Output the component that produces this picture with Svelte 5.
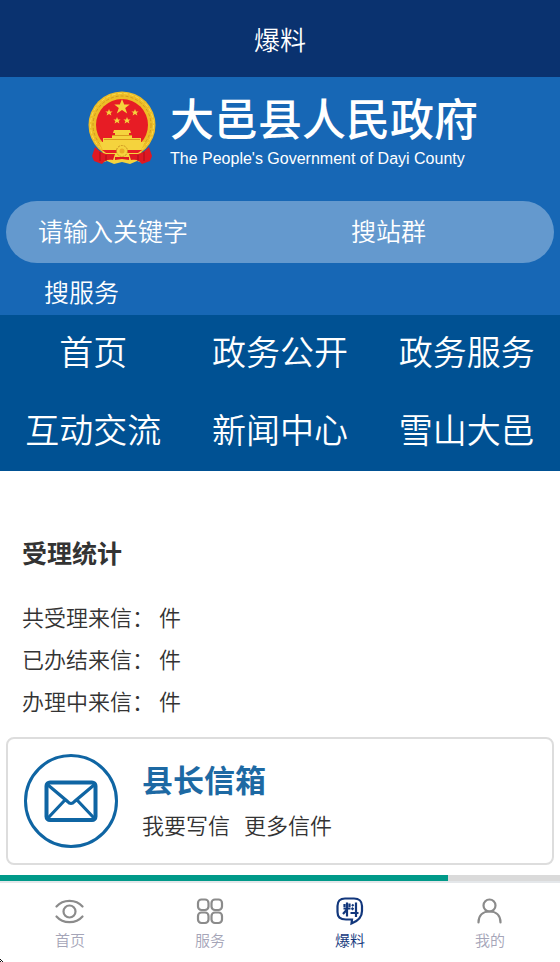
<script>
  const sections = ['首页', '政务公开', '政务服务', '互动交流', '新闻中心', '雪山大邑'];
  const stats = ['共受理来信：', '已办结来信：', '办理中来信：'];
  const tabs = [
    { id: 'home', label: '首页' },
    { id: 'service', label: '服务' },
    { id: 'report', label: '爆料' },
    { id: 'mine', label: '我的' }
  ];
  let active = $state('report');
  let keyword = $state('');
  const progress = 80;
</script>

<div class="page">
  <header class="titlebar"><h1>爆料</h1></header>

  <section class="hero">
    <div class="brand">
      <svg class="emblem" viewBox="0 0 68 74" aria-hidden="true">
        <circle cx="34" cy="34" r="33.500" fill="#edbd27" />
        <circle cx="34" cy="34" r="29" fill="none" stroke="#d39a1e" stroke-width="1" stroke-dasharray="3 2" />
        <circle cx="34" cy="34" r="31.500" fill="none" stroke="#f9db50" stroke-width="1" stroke-dasharray="4 2" />
        <circle cx="34" cy="34" r="26" fill="#e71c25" />
        <g fill="#f5d33d">
          <path d="m34 8 2.200 5.500h5.500l-4.500 3.500 2 5.500-5.200-3.500-5.200 3.500 2-5.500-4.500-3.500h5.500z" />
          <path d="m21 18 1 2.400h2.600l-2 1.600.8 2.500-2.400-1.500-2.400 1.500.8-2.500-2-1.600H20z" />
          <path d="m47 18 1 2.400h2.600l-2 1.600.8 2.500-2.400-1.500-2.400 1.500.8-2.500-2-1.600H46z" />
          <path d="m29 26 1 2.400h2.600l-2 1.600.8 2.500-2.400-1.500-2.400 1.500.8-2.500-2-1.600H28z" />
          <path d="m39 26 1 2.400h2.600l-2 1.600.8 2.500-2.400-1.500-2.400 1.500.8-2.500-2-1.600H38z" />
          <path d="M26 39h16l1 3h-2v2h3v3h9v4H15v-4h9v-3h3v-2h-2z" />
          <path d="M11 51h46l-4 8 2 13-6-2-7 3-8-2-8 2-7-3-6 2 2-13z" />
        </g>
        <path d="M24 44.500h20M16 48.500h36" stroke="#d99b1c" stroke-width="1" />
        <path d="M14 59h40l-4 3H18z" fill="#e71c25" />
        <path d="M7 56c4 4 7 6 11 7h9l-2 6c-5-1-8 0-11 4l-8-3-2-5zM61 56c-4 4-7 6-11 7h-9l2 6c5-1 8 0 11 4l8-3 2-5z" fill="#df1822" />
        <path d="M12 61v9M18 64v6M56 61v9M50 64v6" stroke="#a80d19" />
        <circle cx="34" cy="60" r="5.500" fill="#f5d33d" stroke="#cb9120" stroke-dasharray="2 1" />
        <circle cx="34" cy="60" r="2.500" fill="#e9ad25" />
        <path d="M27 66h14v3l-7-1-7 1z" fill="#df1822" />
      </svg>
      <div class="names">
        <strong>大邑县人民政府</strong>
        <span>The People's Government of Dayi County</span>
      </div>
    </div>
    <form class="search" onsubmit={(e) => e.preventDefault()}>
      <div class="field">
        <input type="text" aria-label="请输入关键字" placeholder="请输入关键字" bind:value={keyword} />
        <button type="submit">搜站群</button>
      </div>
      <button class="second" type="button">搜服务</button>
    </form>
  </section>

  <nav class="sections">
    {#each sections as name}
      <a href="#top">{name}</a>
    {/each}
  </nav>

  <main>
    <h2>受理统计</h2>
    <ul>
      {#each stats as label}
        <li>{label} 件</li>
      {/each}
    </ul>
  </main>

  <section class="card">
    <svg viewBox="0 0 94 94" fill="none" stroke="#0f65a3" aria-hidden="true">
      <circle cx="47" cy="47" r="45.500" stroke-width="3" />
      <rect x="22.500" y="28.500" width="49" height="37.500" rx="3.500" stroke-width="4" />
      <path d="m24 31 19.500 16.500q3.500 4 7 0L70 31M24 64l17-18M70 64 53 46" stroke-width="3.200" />
    </svg>
    <div class="letters">
      <h3>县长信箱</h3>
      <p><a href="#write">我要写信</a><a href="#more">更多信件</a></p>
    </div>
  </section>

  <div class="progress"><div style="width: {progress}%"></div></div>

  <nav class="tabs">
    {#each tabs as tab}
      <button type="button" class:active={active === tab.id} onclick={() => (active = tab.id)}>
        <svg viewBox="0 0 30 30" fill="none" stroke="currentColor" stroke-width="2.200" stroke-linecap="round" aria-hidden="true">
          {#if tab.id === 'home'}
            <circle cx="14.500" cy="15.500" r="6" />
            <path d="M1.500 10.500C8 3 21 3 27.500 10.500M1.500 20.500c6.500 7.500 19.500 7.500 26 0" />
          {:else if tab.id === 'service'}
            <rect x="3" y="3.500" width="10.500" height="10.500" rx="3.500" />
            <rect x="16.500" y="3.500" width="10.500" height="10.500" rx="3.500" />
            <rect x="3" y="16.500" width="10.500" height="10.500" rx="3.500" />
            <rect x="16.500" y="16.500" width="10.500" height="10.500" rx="3.500" />
          {:else if tab.id === 'report'}
            <path d="M10 2.500h9c5 0 8 3 8 7.500v5c0 6-4 10-10.500 12.500l.5-4h-6C5 23.500 2.500 21 2.500 16V10c0-4.500 2.500-7.500 7.500-7.500z" />
            <path d="M8.500 12.500h7M9.500 8v3M14.500 7.500v3.500M12 6.500v14M11.500 14l-3.500 4M17 8.500l1.500 1.500M16.500 12l2 1.500M15.500 17h8M21 6.500v14.500" stroke-linecap="butt" />
          {:else}
            <circle cx="14.500" cy="9.500" r="6" />
            <path d="M3.500 26.500c0-7 4.500-11 11-11s11 4 11 11" />
          {/if}
        </svg>
        <span>{tab.label}</span>
      </button>
    {/each}
    <svg class="pointer" viewBox="0 0 4 4" aria-hidden="true"><path d="M0 0h1v1H0zM1 1h1v1H1zM2 2h1v1H2zM0 2h1v1H0zM3 3h1v1H3z" fill="#111" /></svg>
  </nav>
</div>

<style>
  :global(body) {
    margin: 0;
    background: #fff;
  }
  .page {
    font-family: 'Noto Sans CJK SC', sans-serif;
    color: #333;
    font-weight: 350;
  }
  h1, h2, h3, p, ul {
    margin: 0;
    padding: 0;
    list-style: none;
  }
  a {
    color: inherit;
    text-decoration: none;
  }
  button, input {
    font: inherit;
    color: inherit;
    background: none;
    border: 0;
    padding: 0;
    margin: 0;
  }
  button {
    cursor: pointer;
  }
  .titlebar {
    background: #0a326f;
    color: #fff;
    text-align: center;
    padding: 20px 0;
  }
  .titlebar h1 {
    font-size: 26px;
    line-height: 37px;
    font-weight: 350;
  }
  .hero {
    background: #1767b5;
    color: #fff;
    padding: 14px 6px 0;
  }
  .brand {
    display: flex;
    justify-content: center;
    gap: 14px;
    padding: 0 0 34px 6px;
  }
  .emblem {
    width: 68px;
    height: 74px;
  }
  .names {
    display: flex;
    flex-direction: column;
    font-family: 'Liberation Sans', 'Noto Sans CJK SC', sans-serif;
  }
  .names strong {
    font-size: 44px;
    line-height: 60px;
    font-weight: 500;
  }
  .names span {
    font-size: 16px;
    line-height: 16px;
    font-weight: 400;
  }
  .search {
    font-size: 25px;
  }
  .field {
    box-sizing: border-box;
    display: flex;
    align-items: center;
    height: 62px;
    border-radius: 31px;
    background: #6499ce;
    padding: 0 128px 4px 32px;
  }
  .field input {
    flex: 1;
    min-width: 0;
    height: 50px;
    outline: 0;
  }
  .field input::placeholder {
    color: #fff;
    opacity: 1;
  }
  .second {
    display: block;
    margin-left: 38px;
    padding-top: 4px;
    line-height: 48px;
  }
  .sections {
    display: grid;
    grid-template-columns: repeat(3, 1fr);
    background: #005193;
    color: #fff;
    text-align: center;
    font-size: 34px;
    line-height: 72px;
  }
  .sections a {
    padding-bottom: 6px;
  }
  main {
    padding: 60px 22px 16px;
  }
  h2 {
    font-size: 25px;
    line-height: 42px;
    font-weight: 700;
  }
  ul {
    padding-top: 22px;
    font-size: 22px;
    line-height: 42px;
  }
  .card {
    display: flex;
    align-items: center;
    gap: 24px;
    margin: 0 6px 10px;
    padding: 15px 16px;
    border: 2px solid #ddd;
    border-radius: 8px;
  }
  .card svg {
    width: 94px;
    height: 94px;
  }
  h3 {
    font-size: 31px;
    line-height: 46px;
    font-weight: 700;
    color: #1d69a3;
  }
  .card p {
    display: flex;
    gap: 14px;
    font-size: 22px;
    line-height: 44px;
  }
  .progress {
    height: 6px;
    background: #dadada;
  }
  .progress div {
    height: 6px;
    background: #009a89;
  }
  .tabs {
    position: relative;
    display: flex;
    border-top: 2px solid #e4e7ea;
    background: #fff;
  }
  .tabs button {
    flex: 1;
    display: flex;
    flex-direction: column;
    align-items: center;
    padding: 13px 0 10px;
    color: #8b8b8b;
    font-size: 15px;
    line-height: 27px;
  }
  .tabs button svg {
    width: 30px;
    height: 30px;
  }
  .tabs button span {
    color: #a5a5b8;
  }
  .tabs .active, .tabs .active span {
    color: #12377c;
  }
  .pointer {
    position: absolute;
    left: 0;
    bottom: 0;
    width: 4px;
    height: 4px;
  }
</style>
